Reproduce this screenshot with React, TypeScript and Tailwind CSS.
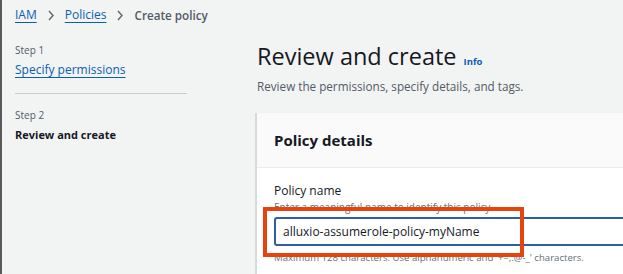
import React from "react";

export default function App() {
  const font = { fontFamily: '"Open Sans", "Noto Sans", Arial, sans-serif' };
  const Chevron = () => (
    <svg className="mx-[11px]" width="6" height="11" viewBox="0 0 6 11">
      <path d="M1 1 L5 5.5 L1 10" fill="none" stroke="#5f6b7a" strokeWidth="1.5" />
    </svg>
  );
  return (
    <div
      className="w-[623px] h-[274px] overflow-hidden bg-[#f2f3f3] border-l-2 border-[#5a5a5a] flex flex-col relative"
      style={font}
    >
      {/* Breadcrumb */}
      <div className="h-[30px] flex items-center pl-[13px] text-[12px] leading-[18px]">
        <span className="text-[#0a5fb4] underline underline-offset-[3px] decoration-1">IAM</span>
        <Chevron />
        <span className="text-[#0a5fb4] underline underline-offset-[3px] decoration-1">Policies</span>
        <Chevron />
        <span className="text-[#545b64] font-semibold text-[11.7px]">Create policy</span>
      </div>

      <div className="flex flex-1">
        {/* Sidebar */}
        <div className="w-[172px] ml-[13px] shrink-0">
          <div className="mt-[12px] text-[10px] leading-[16px] text-[#545b64]">Step 1</div>
          <div className="mt-[2px] text-[12px] leading-[20px] text-[#0a5fb4] underline underline-offset-[3px] decoration-1">
            Specify permissions
          </div>
          <div className="mt-[13px] h-px bg-[#c6cbcf]" />
          <div className="mt-[13px] text-[10px] leading-[16px] text-[#545b64]">Step 2</div>
          <div className="mt-[2px] text-[11px] leading-[20px] font-bold text-[#16191f]">Review and create</div>
        </div>

        {/* Main */}
        <div className="flex-1 ml-[68px] flex flex-col">
          <div className="mt-[10px] flex items-baseline pl-[2px]">
            <span className="text-[23.5px] leading-[32px] text-[#16191f]">Review and create</span>
            <span className="ml-[7px] text-[9.5px] font-bold text-[#0a5fb4]">Info</span>
          </div>
          <div className="mt-[4px] pl-[2px] text-[11.7px] leading-[20px] text-[#545b64]">
            Review the permissions, specify details, and tags.
          </div>

          {/* Card */}
          <div className="mt-[17px] flex-1 border-l-2 border-[#d5dbdb] bg-white relative">
            <div className="h-[55px] bg-[#fafafa] border-b border-[#eaeded] flex items-center pl-[17px]">
              <span className="text-[15px] font-bold text-[#16191f]">Policy details</span>
            </div>
            <div className="pl-[17px] pt-[13px]">
              <div className="text-[12px] leading-[20px] text-[#16191f]">Policy name</div>
              <div className="text-[10px] leading-[12px] text-[#687078] whitespace-nowrap">
                Enter a meaningful name to identify this policy.
              </div>
              <div className="mt-[4px] h-[29px] border-2 border-r-0 border-[#2d5ea8] rounded-l-[3px] flex items-center pl-[7px] text-[12px] text-[#16191f]">
                alluxio-assumerole-policy-myName
              </div>
              <div className="mt-[5px] text-[9.6px] leading-[14px] text-[#687078] whitespace-nowrap">
                Maximum 128 characters. Use alphanumeric and '+=,.@-_' characters.
              </div>
            </div>
            {/* Highlight box */}
            <div className="absolute left-[6px] top-[94px] w-[261px] h-[50px] border-[4px] border-[#e6430d]" />
          </div>
        </div>
      </div>
    </div>
  );
}
